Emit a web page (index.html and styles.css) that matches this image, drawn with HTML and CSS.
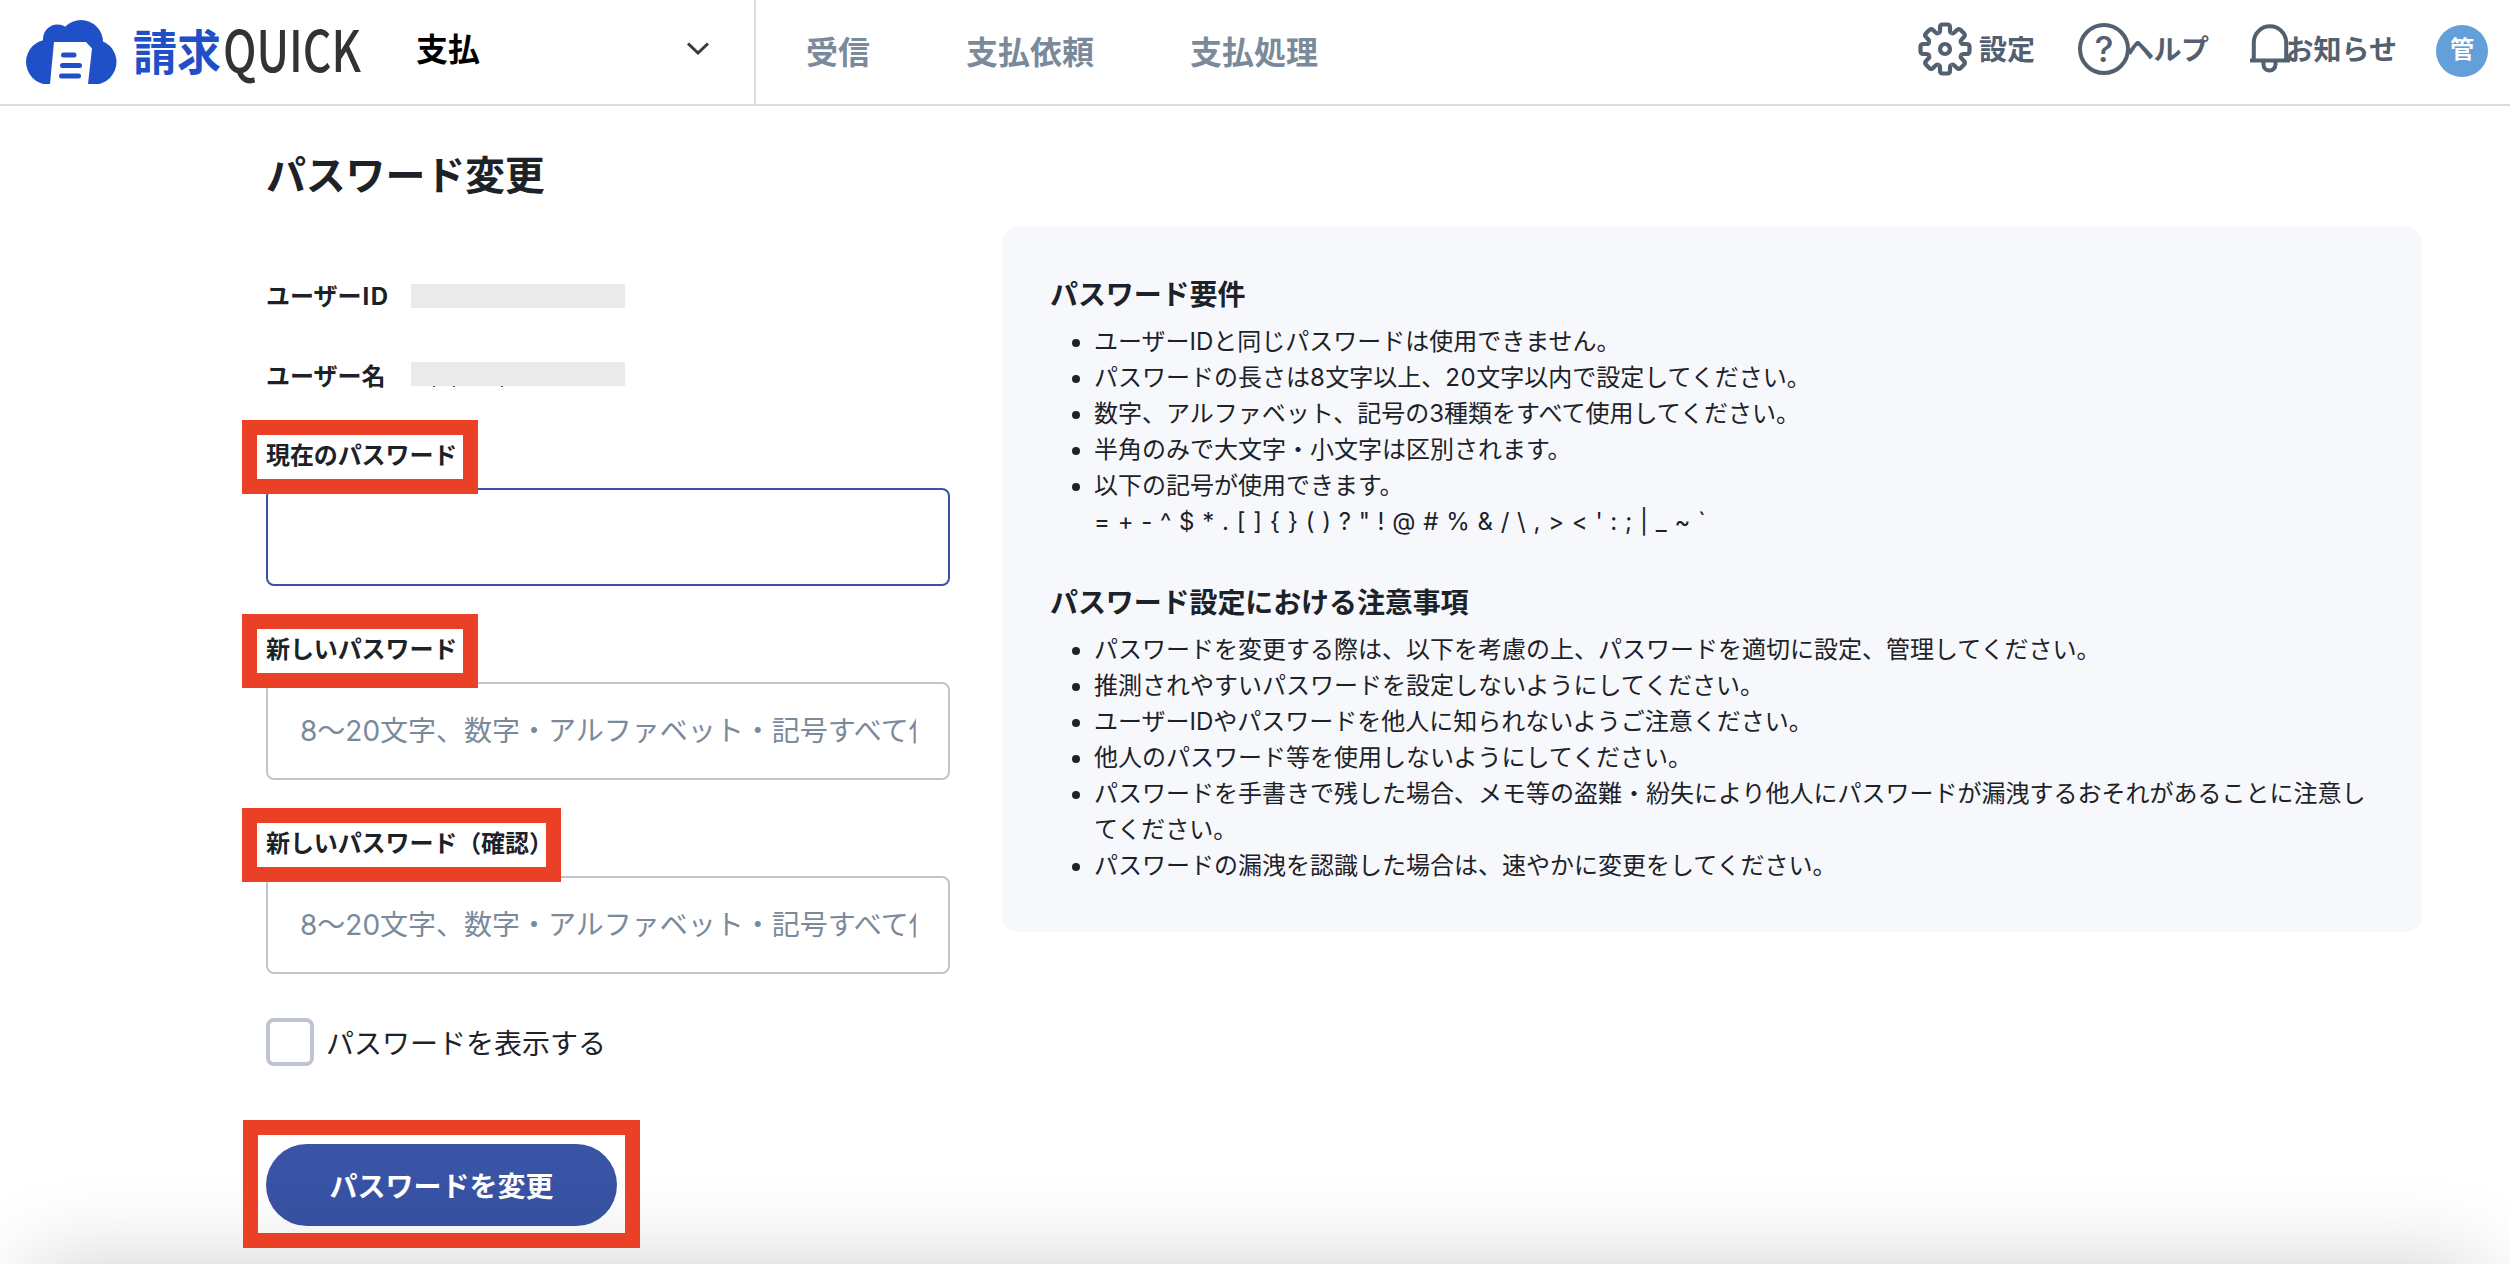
FILE: index.html
```
<!DOCTYPE html>
<html lang="ja">
<head>
  <meta charset="UTF-8">
  <title>パスワード変更 | 請求QUICK</title>
  <link rel="stylesheet" href="styles.css">
</head>
<body>
  <header class="header">
    <a class="logo">
      <svg width="380" height="104" viewBox="0 0 380 104">
        <clipPath id="cloud"><rect x="26" y="18" width="92" height="66"/></clipPath>
        <g clip-path="url(#cloud)" fill="#2050c8">
          <circle cx="48.5" cy="62" r="22.5"/>
          <circle cx="57.5" cy="39" r="14.5"/>
          <circle cx="81" cy="42" r="22"/>
          <circle cx="94" cy="62" r="22.5"/>
          <rect x="48" y="38" width="46" height="46"/>
        </g>
        <path d="M54 42h32l6 6.500-4 35.500H50z" fill="#fff"/>
        <path d="M63.500 55H74M62.500 65.500h17M61.500 76h17" stroke="#2050c8" stroke-width="5" stroke-linecap="round"/>
        <text class="logo-kanji" x="133" y="69.500" textLength="88" lengthAdjust="spacingAndGlyphs">請求</text>
        <text class="logo-quick" x="223" y="72" textLength="138" lengthAdjust="spacingAndGlyphs">QUICK</text>
      </svg>
    </a>
    <div class="mode">
      <span>支払</span>
      <svg width="24" height="16" viewBox="0 0 24 16"><path d="M2 2.500l10 9.500 10-9.500" fill="none" stroke="#343a40" stroke-width="3"/></svg>
    </div>
    <nav class="nav">
      <a>受信</a>
      <a>支払依頼</a>
      <a>支払処理</a>
    </nav>
    <div class="tools">
      <a class="tool tool-setting">
        <svg width="54" height="54" viewBox="-27 -27 54 54" fill="none" stroke="#52606f" stroke-width="4.200">
          <path id="tooth" d="M-6.600 -15.900Q-5 -16.600 -5 -18.500V-21.500Q-5 -24.500 -2.300 -24.500H2.300Q5 -24.500 5 -21.500V-18.500Q5 -16.600 6.600 -15.900"/>
          <use href="#tooth" transform="rotate(45)"/>
          <use href="#tooth" transform="rotate(90)"/>
          <use href="#tooth" transform="rotate(135)"/>
          <use href="#tooth" transform="rotate(180)"/>
          <use href="#tooth" transform="rotate(225)"/>
          <use href="#tooth" transform="rotate(270)"/>
          <use href="#tooth" transform="rotate(315)"/>
          <circle r="5"/>
        </svg>
        <span>設定</span>
      </a>
      <a class="tool tool-help">
        <svg width="54" height="54" viewBox="-27 -27 54 54">
          <circle r="24" fill="none" stroke="#52606f" stroke-width="4"/>
          <text class="question" y="13" text-anchor="middle">?</text>
        </svg>
        <span>ヘルプ</span>
      </a>
      <a class="tool tool-info">
        <svg width="42" height="50" viewBox="0 0 42 50" fill="none" stroke="#52606f" stroke-width="4">
          <path d="M4.800 36V18.500a16.200 16.200 0 0 1 32.400 0V36M1 36.500h40M14.500 38v2.500a6 6 0 0 0 12 0V38"/>
        </svg>
        <span>お知らせ</span>
      </a>
      <div class="avatar">管</div>
    </div>
  </header>

  <main class="main">
    <h1>パスワード変更</h1>
    <div class="columns">
      <form class="form">
        <div class="user-row">
          <span class="user-label">ユーザー<i>ID</i></span>
          <span class="mask"></span>
        </div>
        <div class="user-row">
          <span class="user-label">ユーザー名</span>
          <span class="mask mask-name"></span>
        </div>
        <div class="field">
          <label class="marked" for="current">現在のパスワード</label>
          <input class="input focused" id="current" type="text">
        </div>
        <div class="field">
          <label class="marked" for="new">新しいパスワード</label>
          <input class="input" id="new" type="text" placeholder="8〜20文字、数字・アルファベット・記号すべて使用">
        </div>
        <div class="field">
          <label class="marked marked-wide" for="confirm">新しいパスワード（確認）</label>
          <input class="input" id="confirm" type="text" placeholder="8〜20文字、数字・アルファベット・記号すべて使用">
        </div>
        <label class="show-password">
          <input type="checkbox">
          <span>パスワードを表示する</span>
        </label>
        <div class="marked submit-box">
          <button class="submit" type="button">パスワードを変更</button>
        </div>
      </form>

      <section class="panel">
        <h2>パスワード要件</h2>
        <ul>
          <li>ユーザーIDと同じパスワードは使用できません。</li>
          <li>パスワードの長さは<b>8</b>文字以上、<b>20</b>文字以内で設定してください。</li>
          <li>数字、アルファベット、記号の3種類をすべて使用してください。</li>
          <li>半角のみで大文字・小文字は区別されます。</li>
          <li>以下の記号が使用できます。<br><span class="symbols">= + - ^ $ * . [ ] { } ( ) ? " ! @ # % &amp; / \ , &gt; &lt; ' : ; | _ ~ `</span></li>
        </ul>
        <h2>パスワード設定における注意事項</h2>
        <ul>
          <li>パスワードを変更する際は、以下を考慮の上、パスワードを適切に設定、管理してください。</li>
          <li>推測されやすいパスワードを設定しないようにしてください。</li>
          <li>ユーザーIDやパスワードを他人に知られないようご注意ください。</li>
          <li>他人のパスワード等を使用しないようにしてください。</li>
          <li>パスワードを手書きで残した場合、メモ等の盗難・紛失により他人にパスワードが漏洩するおそれがあることに注意してください。</li>
          <li>パスワードの漏洩を認識した場合は、速やかに変更をしてください。</li>
        </ul>
      </section>
    </div>
  </main>
  <div class="bottom-shadow"></div>
</body>
</html>
```

FILE: styles.css
```
*, *::after { box-sizing: border-box; }

html {
  overflow: hidden;
}

body {
  margin: 0;
  height: 1264px;
  position: relative;
  overflow: hidden;
  background: #fff;
  color: #1c2228;
  font-family: Inter, "Noto Sans CJK JP", sans-serif;
  font-size: 24px;
}

/* header */
.header {
  display: flex;
  height: 106px;
  border-bottom: 2px solid #d8dfe3;
  font-weight: bold;
}
.logo {
  width: 380px;
}
.logo-kanji {
  font-family: "Noto Sans CJK JP", sans-serif;
  font-size: 48px;
  font-weight: 700;
  fill: #2050c8;
}
.logo-quick {
  font-family: "Noto Sans CJK JP", sans-serif;
  font-size: 57px;
  font-weight: 500;
  fill: #333;
}
.mode {
  display: flex;
  align-items: center;
  justify-content: space-between;
  width: 376px;
  padding: 0 44px 11px 36px;
  border-right: 2px solid #d8dfe3;
  font-size: 32px;
  color: #000;
}
.mode svg {
  margin-top: 5px;
}
.nav {
  display: flex;
  align-items: center;
  gap: 96px;
  padding: 0 0 5px 50px;
  font-size: 32px;
  color: #7b8a9a;
}
.tools {
  display: flex;
  align-items: center;
  margin-left: auto;
  padding: 0 22px 6px 0;
  font-size: 28px;
  color: #52606f;
}
.tool {
  display: flex;
  align-items: center;
}
.tool span {
  margin-top: -2px;
}
.tool-setting { gap: 7px; }
.tool-help { margin-left: 42px; }
.tool-help span {
  margin-left: -5px;
  letter-spacing: -0.5px;
}
.tool-info { margin-left: 40px; }
.tool-info span { margin-left: -5px; }
.question {
  font-size: 36px;
  font-weight: 500;
  fill: #52606f;
}
.avatar {
  width: 52px;
  height: 52px;
  margin: 4px 0 0 39px;
  border-radius: 50%;
  background: #639fd8;
  color: #fff;
  font-size: 24px;
  line-height: 50px;
  text-align: center;
}

/* content */
.main {
  padding: 40px 88px 0 266px;
}
h1 {
  margin: 0 0 20px;
  font-size: 40px;
  line-height: 60px;
  letter-spacing: -0.2px;
}
.columns {
  display: grid;
  grid-template-columns: 684px 1420px;
  gap: 52px;
  align-items: start;
}
.form {
  padding-top: 50px;
}
.user-row {
  display: flex;
  align-items: center;
  height: 40px;
  margin-bottom: 40px;
  font-weight: bold;
}
.user-label {
  width: 145px;
  padding-bottom: 4px;
}
.user-label i {
  font-style: normal;
  letter-spacing: 1.5px;
  padding-left: 1px;
}
.mask {
  width: 214px;
  height: 24px;
  background: #eaeaea;
}
/* tips of the masked name stick out below the bar */
.mask-name {
  height: 25px;
  margin-top: -3px;
  background:
    linear-gradient(#555, #555) 22px 100% / 2px 1px no-repeat,
    linear-gradient(#555, #555) 42px 100% / 2px 1px no-repeat,
    linear-gradient(#555, #555) 90px 100% / 2px 1px no-repeat,
    linear-gradient(#eaeaea, #eaeaea) 0 0 / 100% 24px no-repeat;
}
.field {
  margin-bottom: 44px;
}
.field label {
  display: block;
  width: max-content;
  margin-bottom: 12px;
  font-weight: bold;
  line-height: 40px;
  letter-spacing: -0.1px;
}

/* red frames round the parts to fill in */
.marked {
  position: relative;
}
.marked::after {
  content: "";
  position: absolute;
  z-index: 2;
  top: -16px;
  left: -24px;
  width: 236px;
  height: 74px;
  border: 15px solid #ea4026;
  pointer-events: none;
}
.marked-wide::after {
  width: 319px;
}
.submit-box::after {
  top: -24px;
  left: -23px;
  width: 397px;
  height: 128px;
}

.input {
  display: block;
  width: 684px;
  height: 98px;
  padding: 0 32px;
  border: 2px solid #bfc5d0;
  border-radius: 8px;
  background: #fff;
  font-family: inherit;
  font-size: 28px;
}
.input::placeholder {
  color: #7b8a9a;
  opacity: 1;
}
.input.focused {
  border-color: #3953a5;
}
.show-password {
  display: flex;
  align-items: center;
  gap: 12px;
  height: 48px;
  margin-bottom: 78px;
  font-size: 28px;
}
.show-password input {
  appearance: none;
  width: 48px;
  height: 48px;
  margin: 0;
  border: 4px solid #bfc5d0;
  border-radius: 8px;
}
.submit {
  display: block;
  width: 351px;
  height: 82px;
  padding: 0;
  border: 0;
  border-radius: 41px;
  background: #3953a5;
  color: #fff;
  font-family: inherit;
  font-size: 28px;
  font-weight: bold;
}

.panel {
  height: 706px;
  padding: 48px;
  border-radius: 16px;
  background: #f7f8fc;
}
.panel h2 {
  margin: 0 0 8px;
  font-size: 28px;
  line-height: 42px;
  letter-spacing: -0.1px;
}
.panel ul {
  margin: 0 0 42px;
  padding-left: 44px;
  line-height: 36px;
}
.panel li {
  height: 36px;
}
.panel li:nth-child(5) {
  height: 72px;
}
.panel b {
  font-weight: normal;
  letter-spacing: 0.5px;
}
.symbols {
  letter-spacing: 0.5px;
}

.bottom-shadow {
  position: absolute;
  top: 1264px;
  left: 30px;
  right: 30px;
  height: 200px;
  box-shadow: 0 0 90px rgba(0, 0, 0, 0.19);
}
```
